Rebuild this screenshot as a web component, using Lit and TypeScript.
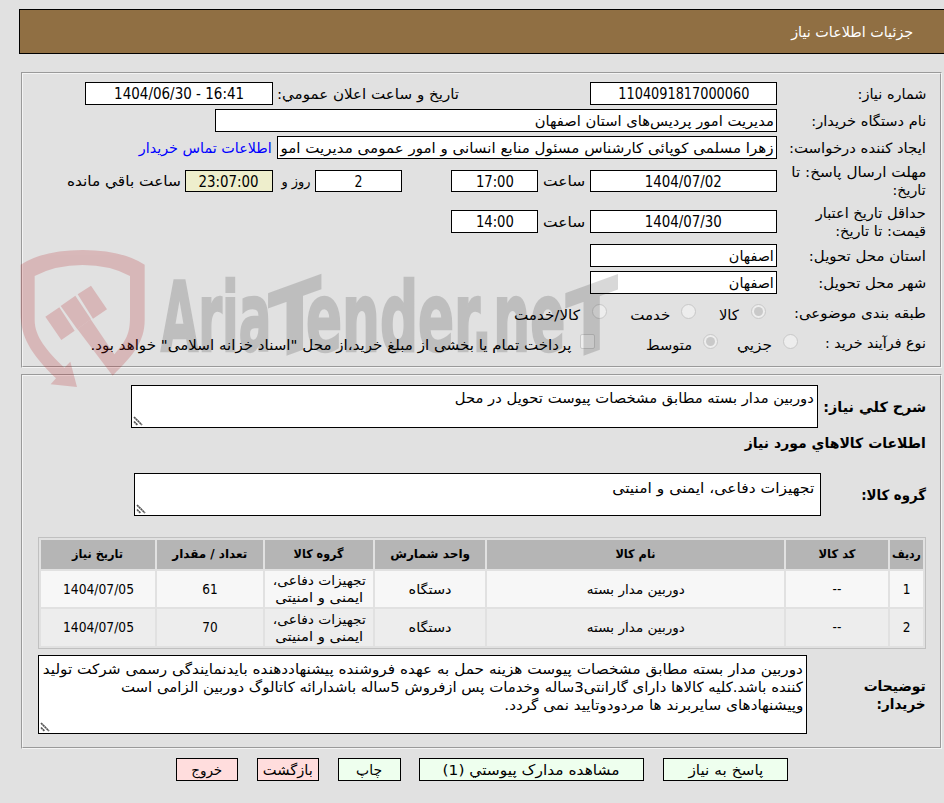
import { LitElement, html, css, svg } from "lit";
import { customElement, property } from "lit/decorators.js";
import { classMap } from "lit/directives/class-map.js";
import { styleMap } from "lit/directives/style-map.js";

/** One line of text, stretched or condensed horizontally to a set width. */
@customElement("fit-text")
class FitText extends LitElement {
  @property() text = "";
  @property({ type: Number }) w = 0;

  static styles = css`
    :host { display: inline-block; flex: none; white-space: nowrap; text-align: start; }
    .line { display: inline-block; white-space: nowrap; transform-origin: 100% 50%; unicode-bidi: plaintext; }
    .slot { display: flex; justify-content: flex-start; direction: rtl; }
  `;

  render() {
    return html`<div class="slot" style=${styleMap({ width: this.w + "px" })}><span class="line">${this.text}</span></div>`;
  }

  private fit() {
    const el = this.renderRoot.querySelector(".line") as HTMLElement;
    el.style.transform = "none";
    const natural = el.getBoundingClientRect().width;
    if (natural > 0) el.style.transform = `scaleX(${this.w / natural})`;
  }

  updated() {
    this.fit();
    document.fonts?.ready.then(() => this.fit());
  }
}

const fit = (text: string, w: number) => html`<fit-text .text=${text} .w=${w}></fit-text>`;

type Item = {
  k: "box" | "num" | "text" | "link" | "radio" | "check";
  w: number;
  gap?: number;
  t?: string;
  tw?: number;
  on?: boolean;
  warm?: boolean;
};
type Row = { size: string; label: [string, number][]; labelW?: number; items: Item[] };

const rows: Row[] = [
  { size: "std", label: [["شماره نیاز:", 69]], items: [
    { k: "num", w: 187, t: "1104091817000060", tw: 131 },
    { k: "text", gap: 131, w: 182, t: "تاریخ و ساعت اعلان عمومي:" },
    { k: "num", gap: 4, w: 188, t: "1404/06/30 - 16:41", tw: 130 } ] },
  { size: "std", label: [["نام دستگاه خریدار:", 115]], items: [
    { k: "box", w: 562, t: "مدیریت امور پردیس‌های استان اصفهان", tw: 239 } ] },
  { size: "std", label: [["ایجاد کننده درخواست:", 137]], items: [
    { k: "box", w: 500, t: "زهرا مسلمی کوپائی کارشناس مسئول منابع انسانی و امور عمومی مدیریت امو", tw: 493 },
    { k: "link", gap: 5, w: 133, t: "اطلاعات تماس خریدار" } ] },
  { size: "tall", label: [["مهلت ارسال پاسخ: تا", 135], ["تاریخ:", 33]], items: [
    { k: "num", w: 187, t: "1404/07/02", tw: 77 },
    { k: "text", gap: 5, w: 42, t: "ساعت" },
    { k: "num", gap: 5, w: 87, t: "17:00", tw: 38 },
    { k: "num", gap: 49, w: 87, t: "2", tw: 8 },
    { k: "text", gap: 5, w: 29, t: "روز و" },
    { k: "num", gap: 8, w: 88, t: "23:07:00", tw: 60, warm: true },
    { k: "text", gap: 4, w: 114, t: "ساعت باقي مانده" } ] },
  { size: "taller", label: [["حداقل تاریخ اعتبار", 110], ["قیمت: تا تاریخ:", 91]], items: [
    { k: "num", w: 187, t: "1404/07/30", tw: 77 },
    { k: "text", gap: 5, w: 42, t: "ساعت" },
    { k: "num", gap: 5, w: 87, t: "14:00", tw: 38 } ] },
  { size: "std", label: [["استان محل تحویل:", 117]], items: [{ k: "box", w: 187, t: "اصفهان", tw: 45 }] },
  { size: "std", label: [["شهر محل تحویل:", 108]], items: [{ k: "box", w: 187, t: "اصفهان", tw: 45 }] },
  { size: "opt", label: [["طبقه بندی موضوعی:", 132]], items: [
    { k: "radio", gap: 11, w: 15, on: true }, { k: "text", gap: 12, w: 20, t: "کالا" },
    { k: "radio", gap: 23, w: 15 }, { k: "text", gap: 11, w: 40, t: "خدمت" },
    { k: "radio", gap: 23, w: 15 }, { k: "text", gap: 12, w: 66, t: "کالا/خدمت" } ] },
  { size: "opt", labelW: 128, label: [["نوع فرآیند خرید :", 101]], items: [
    { k: "radio", w: 15 }, { k: "text", gap: 11, w: 35, t: "جزیي" },
    { k: "radio", gap: 19, w: 15, on: true }, { k: "text", gap: 11, w: 46, t: "متوسط" },
    { k: "check", gap: 51, w: 15 },
    { k: "text", gap: 9, w: 481, t: "پرداخت تمام یا بخشی از مبلغ خرید،از محل \"اسناد خزانه اسلامی\" خواهد بود." } ] },
];

const heads: [string, number][] = [
  ["ردیف", 29], ["کد کالا", 37], ["نام کالا", 40], ["واحد شمارش", 80], ["گروه کالا", 50], ["تعداد / مقدار", 75], ["تاریخ نیاز", 51],
];
const goods = [
  { n: "1", qty: "61", date: "1404/07/05" },
  { n: "2", qty: "70", date: "1404/07/05" },
];

const buttons: { t: string; w: number; tw: number; red?: boolean; gap: number }[] = [
  { t: "پاسخ به نیاز", w: 125, tw: 75, gap: 0 },
  { t: "مشاهده مدارک پیوستي (1)", w: 225, tw: 177, gap: 19 },
  { t: "چاپ", w: 63, tw: 26, gap: 18 },
  { t: "بازگشت", w: 62, tw: 50, gap: 19, red: true },
  { t: "خروج", w: 62, tw: 31, gap: 19, red: true },
];

@customElement("app-root")
class AppRoot extends LitElement {
  static styles = css`
    :host {
      display: block; position: relative; width: 944px; height: 803px; overflow: hidden;
      box-sizing: border-box; padding-top: 9px; direction: rtl; background: #e1e1e1; color: #000;
      font: 14px/18px "DejaVu Sans", "Noto Sans", sans-serif;
    }
    * { box-sizing: border-box; }
    .header {
      height: 45px; margin-left: 19px; padding-right: 31px; display: flex; align-items: center;
      background: #906f43; color: #fff; border: 1px solid #000; border-right: 0;
    }
    .panel { margin: 18px 2px 0 21px; border: 1px solid; border-color: #9a9a9a #f4f4f4 #f4f4f4 #9a9a9a; }
    .inner { height: 100%; padding: 6px 14px 0; border: 1px solid; border-color: #f4f4f4 #9a9a9a #9a9a9a #f4f4f4; }
    .first { height: 296px; }
    .second { height: 375px; margin-top: 6px; }
    .second .inner { padding-top: 9px; }
    .row { display: flex; align-items: center; }
    .std { height: 27px; }
    .tall { height: 40px; }
    .taller { height: 41px; }
    .opt { height: 30px; }
    .label { flex: none; width: 149px; display: flex; flex-direction: column; align-items: flex-start; }
    .opt .label { padding-top: 3px; }
    .field { flex: none; height: 23px; display: flex; align-items: center; background: #fff; border: 1px solid #000; padding-right: 2px; }
    .tall .field { height: 22px; }
    .field.num { justify-content: center; padding: 1px 0 0; font: 15px/18px "DejaVu Sans Condensed", "DejaVu Sans", sans-serif; }
    .field.warm { background: #eeeecc; }
    .link { color: #0000ff; }
    .radio, .check { flex: none; height: 15px; border: 1px solid #c8c8c8; background: #ededed; border-radius: 50%; display: grid; place-items: center; }
    .check { border-radius: 2px; }
    .dot { width: 9px; height: 9px; border-radius: 50%; background: #c9c9c9; }
    .opt .word { padding-top: 7px; }

    .bold { font-weight: bold; }
    .area { flex: none; background: #fff; border: 1px solid #000; display: flex; flex-direction: column; justify-content: space-between; }
    .lines { display: flex; flex-direction: column; align-items: flex-start; }
    .grip { display: block; align-self: flex-end; margin: 0 0 1px 1px; }
    .a1 { width: 687px; height: 43px; padding: 3px 3px 0 0; margin-right: 5px; }
    .a2 { width: 687px; height: 43px; padding: 5px 6px 0 0; }
    .a3 { width: 769px; height: 79px; padding: 4px 3px 0 0; }
    .l1 { width: 103px; }
    .l2 { width: 105px; }
    .l3 { width: 119px; display: flex; flex-direction: column; align-items: flex-start; }
    .title { height: 18px; margin-top: 6px; }
    .group { margin-top: 21px; }
    .note { margin-top: 6px; }

    .table {
      width: 888px; height: 112px; margin-top: 21px; padding: 2px; border: 1px solid #c0c0c0;
      display: grid; grid-template-columns: 33px 102px 297px 110px 108px 106px 114px;
      grid-template-rows: 29px 36px 37px; gap: 2px; font-size: 13px; line-height: 17px;
    }
    .cell { display: flex; flex-direction: column; align-items: center; justify-content: center; overflow: hidden; background: #f7f7f7; }
    .even { background: #ededed; }
    .head { background: #b5b5b5; font-weight: bold; font-size: 12px; }
    .digits { font-family: "DejaVu Sans Condensed", "DejaVu Sans", sans-serif; font-size: 13.5px; }

    .buttons { display: flex; margin-top: 9px; padding-right: 156px; }
    .button { flex: none; height: 23px; display: flex; align-items: center; justify-content: center; border: 1px solid #000; background: #eeffee; padding: 0; }
    .red { background: #ffdddd; }

    .watermark { position: absolute; left: 0; top: 230px; pointer-events: none; }
    .brand { font-family: "DejaVu Sans Condensed", "DejaVu Sans", sans-serif; font-weight: bold; direction: ltr; }
  `;

  item(i: Item) {
    const pos = styleMap({ width: i.w + "px", marginRight: (i.gap ?? 0) + "px" });
    if (i.k === "radio" || i.k === "check")
      return html`<div class=${i.k} style=${pos}>${i.on ? html`<div class="dot"></div>` : ""}</div>`;
    if (i.k === "text" || i.k === "link")
      return html`<div class=${classMap({ word: true, link: i.k === "link" })} style=${pos}>${fit(i.t!, i.w)}</div>`;
    return html`<div class=${classMap({ field: true, num: i.k === "num", warm: !!i.warm })} style=${pos}>${fit(i.t!, i.tw!)}</div>`;
  }

  row(r: Row) {
    return html`<div class="row ${r.size}">
      <div class="label" style=${styleMap(r.labelW ? { width: r.labelW + "px" } : {})}>${r.label.map(([t, w]) => fit(t, w))}</div>
      ${r.items.map((i) => this.item(i))}
    </div>`;
  }

  area(cls: string, lines: [string, number][]) {
    return html`<div class="area ${cls}">
      <div class="lines">${lines.map(([t, w]) => fit(t, w))}</div>
      <svg class="grip" width="10" height="10" viewBox="0 0 10 10"><path d="M1 1L9 9M1 5.5L4.5 9" stroke="#555" stroke-width="1.7" stroke-dasharray="2.2 .4" fill="none"/></svg>
    </div>`;
  }

  watermark() {
    const runs: [string, number, number][] = [["Aria", 482, 332], ["ender.", 918, 558], ["ne", 1480, 216]];
    return html`<svg class="watermark" width="944" height="170" viewBox="0 0 2832 510">
      <g fill="#b41419" opacity=".2">
        <path d="M62 104Q130 60 248 60T434 104V270C434 335 400 375 338 437L232 297L272 268L343 373C380 330 390 310 390 260V138Q330 105 248 105T104 138V270C104 320 140 362 193 413L211 395L231 471L152 463L168 445C90 370 62 320 62 250Z"/>
        <path d="M136 260L178 232L224 302L184 330ZM182 228L226 197L273 268L232 298ZM233 193L273 167L321 238L279 266Z"/>
      </g>
      <g class="brand" fill="#000" stroke="#000" stroke-width="7" opacity=".15">
        ${runs.map(([t, x, w]) => svg`<text x=${x} y="362" font-size="286" textLength=${w} lengthAdjust="spacingAndGlyphs">${t}</text>`)}
        <text transform="translate(806 393) skewY(-20)" font-size="275" textLength="156" lengthAdjust="spacingAndGlyphs">T</text>
        <text transform="translate(1698 393) skewY(-20)" font-size="275" textLength="154" lengthAdjust="spacingAndGlyphs">T</text>
      </g>
    </svg>`;
  }

  render() {
    return html`
      <div class="header">${fit("جزئیات اطلاعات نیاز", 122)}</div>
      <div class="panel first"><div class="inner">${rows.map((r) => this.row(r))}</div></div>
      <div class="panel second"><div class="inner">
        <div class="row"><div class="bold l1">${fit("شرح کلي نیاز:", 103)}</div>
          ${this.area("a1", [["دوربین مدار بسته مطابق مشخصات پیوست تحویل در محل", 359]])}</div>
        <div class="title bold">${fit("اطلاعات کالاهاي مورد نیاز", 181)}</div>
        <div class="row group"><div class="bold l2">${fit("گروه کالا:", 65)}</div>
          ${this.area("a2", [["تجهیزات دفاعی، ایمنی و امنیتی", 202]])}</div>
        <div class="table">
          ${heads.map(([t, w]) => html`<div class="cell head">${fit(t, w)}</div>`)}
          ${goods.map((g, i) => {
            const c = i % 2 ? "cell even" : "cell";
            return html`
              <div class="${c} digits">${g.n}</div>
              <div class="${c} digits">--</div>
              <div class=${c}>${fit("دوربین مدار بسته", 98)}</div>
              <div class=${c}>${fit("دستگاه", 43)}</div>
              <div class=${c}>${fit("تجهیزات دفاعی،", 93)}${fit("ایمنی و امنیتی", 88)}</div>
              <div class="${c} digits">${g.qty}</div>
              <div class="${c} digits">${fit(g.date, 71)}</div>`;
          })}
        </div>
        <div class="row note"><div class="bold l3">${fit("توضیحات", 62)}${fit("خریدار:", 49)}</div>
          ${this.area("a3", [
            ["دوربین مدار بسته مطابق مشخصات پیوست هزینه حمل به عهده فروشنده پیشنهاددهنده بایدنمایندگی رسمی شرکت تولید", 760],
            ["کننده باشد.کلیه کالاها دارای گارانتی3ساله وخدمات پس ازفروش 5ساله باشدارائه کاتالوگ دوربین الزامی است", 682],
            ["وپیشنهادهای سایربرند ها مردودوتایید نمی گردد.", 299],
          ])}</div>
      </div></div>
      <div class="buttons">${buttons.map((b) => html`<div class=${classMap({ button: true, red: !!b.red })}
        style=${styleMap({ width: b.w + "px", marginRight: b.gap + "px" })}>${fit(b.t, b.tw)}</div>`)}</div>
      ${this.watermark()}
    `;
  }
}
